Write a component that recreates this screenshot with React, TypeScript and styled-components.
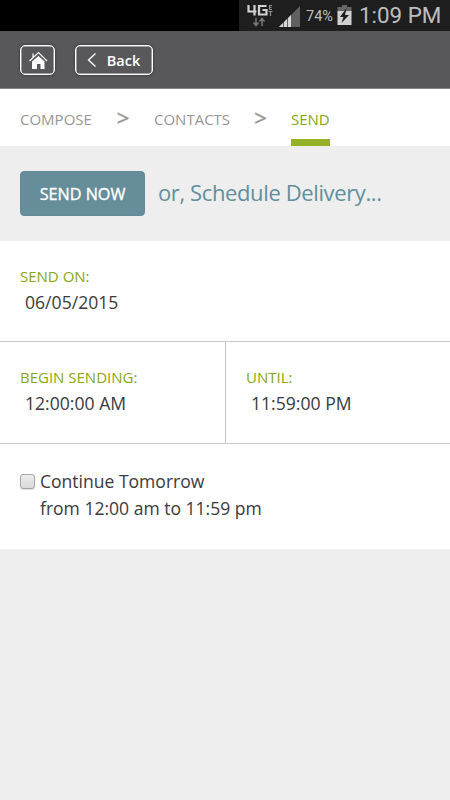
import React from 'react';
import styled, { createGlobalStyle } from 'styled-components';

const Global = createGlobalStyle`
  * { box-sizing: border-box; }
  body { margin: 0; background: #eee; font-family: "Open Sans", sans-serif; color: #3a3a3c; }
`;

const Screen = styled.main`
  width: 450px;
  height: 800px;
  display: flex;
  flex-direction: column;
  background: #eee;
  overflow: hidden;
  white-space: nowrap;
`;

const StatusBar = styled.div`
  flex: none;
  height: 31px;
  display: flex;
  justify-content: flex-end;
  background: #000;
`;

const StatusTray = styled.div`
  width: 211px;
  display: flex;
  background: #1e1e1e;
  color: #bebebe;
  font-family: Roboto, sans-serif;
`;

const TrayIcons = styled.svg`
  flex: none;
  width: 67px;
  height: 31px;
`;

const BatteryIcon = styled.svg`
  flex: none;
  width: 20px;
  height: 31px;
`;

const Percent = styled.span`
  width: 31px;
  font-size: 14.5px;
  line-height: 33px;
`;

const Clock = styled.span`
  margin-left: 2px;
  font-size: 22.4px;
  line-height: 31px;
`;

const Toolbar = styled.header`
  flex: none;
  height: 58px;
  display: flex;
  align-items: flex-start;
  gap: 20px;
  padding: 14px 20px 0;
  background: #58585a;
  border-bottom: 1px solid #858586;
`;

const ToolButton = styled.button<{ $width: number }>`
  width: ${(p) => p.$width}px;
  height: 30px;
  display: flex;
  align-items: center;
  justify-content: center;
  padding: 0;
  border: 1px solid #fff;
  border-radius: 5px;
  background: #58585a;
  box-shadow: inset 0 0 0 0.5px #ddd, 0 0 2px 1px #444446;
  color: #fff;
  font: 600 14.5px/30px "Open Sans", sans-serif;
`;

const BackLabel = styled.span`
  margin-left: 10px;
  margin-right: 1px;
  padding-top: 1px;
`;

const Steps = styled.nav`
  flex: none;
  height: 57px;
  display: flex;
  padding-left: 20px;
  background: #fff;
`;

const Step = styled.span<{ $active?: boolean; $width: number }>`
  width: ${(p) => p.$width}px;
  height: 57px;
  font-size: 15px;
  line-height: 61px;
  color: ${(p) => (p.$active ? '#87a613' : '#979797')};
  border-bottom: ${(p) => (p.$active ? '7px solid #94b025' : '0')};
`;

const Separator = styled.span<{ $width: number }>`
  width: ${(p) => p.$width}px;
  text-align: center;
  font-size: 22px;
  line-height: 57px;
  color: #979797;
  -webkit-text-stroke: 0.4px #979797;
`;

const Actions = styled.section`
  flex: none;
  height: 95px;
  display: flex;
  align-items: flex-start;
  gap: 13px;
  padding: 25px 20px 0;
`;

const SendButton = styled.button`
  width: 125px;
  height: 45px;
  padding: 0;
  border: 1px solid #5f8c98;
  border-radius: 4px;
  background: #668e9a;
  color: #fff;
  font: 400 16.2px/44px "Open Sans", sans-serif;
  -webkit-text-stroke: 0.35px #fff;
`;

const ScheduleLink = styled.a`
  font-size: 22px;
  letter-spacing: -0.38px;
  line-height: 42px;
  color: #628f9b;
`;

const Row = styled.section<{ $height: number }>`
  flex: none;
  height: ${(p) => p.$height}px;
  display: flex;
  background: #fff;
  border-bottom: 1px solid #c8c8c8;
`;

const Field = styled.div<{ $divided?: boolean }>`
  width: ${(p) => (p.$divided ? '226px' : 'auto')};
  padding: 24px 0 0 20px;
  border-right: ${(p) => (p.$divided ? '1px solid #c8c8c8' : '0')};
`;

const FieldLabel = styled.div`
  font-size: 15px;
  line-height: 23px;
  color: #87a810;
`;

const FieldValue = styled.div`
  padding-left: 5px;
  font-size: 17.6px;
  line-height: 28px;
`;

const Repeat = styled.section`
  flex: none;
  height: 105px;
  display: flex;
  gap: 5px;
  padding: 24px 20px 0;
  background: #fff;
  font-size: 17.55px;
  line-height: 27px;
`;

const Checkbox = styled.span`
  width: 15px;
  height: 15px;
  margin-top: 6px;
  border: 1px solid #a5a5a5;
  border-radius: 3px;
  background: linear-gradient(#ececec, #dadada);
  box-shadow: 0 1px 1px #ddd;
`;

export default function App() {
  return (
    <Screen>
      <Global />
      <StatusBar>
        <StatusTray>
          <TrayIcons viewBox="0 0 67 31">
            <g fill="none" stroke="#d2d2d2" strokeWidth="2.2">
              <path d="M9.500 5v6.500h8M15.500 5v10.500" />
              <path d="M27.500 6h-7.500v8.500h7.500v-4.500h-4" />
            </g>
            <path d="M33 5.500h-2.500v4h2.500M30.500 7.500h2M29.500 11.500h4M31.500 11.500v4.500" fill="none" stroke="#8d8d8d" strokeWidth="1.200" />
            <path d="M17 18v7M14.500 22.500 17 25.500l2.500-3M23 26v-7M20.500 21.500 23 18.500l2.500 3" fill="none" stroke="#777" strokeWidth="1.500" />
            <path d="M40 27 61 6v21z" fill="#606060" />
            <path d="M40 27l4-4v4zM45 27v-5l3-3v8zM49 27v-9l3-3v12z" fill="#d8d8d8" />
          </TrayIcons>
          <Percent>74%</Percent>
          <BatteryIcon viewBox="0 0 20 31">
            <path d="M5 5h5v2h4.500v6H0.500V7H5z" fill="#666" />
            <path d="M0.500 11h14v14h-14z" fill="#d0d0d0" />
            <path d="M9.500 8 3 17h3.500l-2 6 7.500-8H8z" fill="#1e1e1e" />
          </BatteryIcon>
          <Clock>1:09 PM</Clock>
        </StatusTray>
      </StatusBar>
      <Toolbar>
        <ToolButton $width={35} aria-label="Home">
          <svg width="20" height="20" viewBox="0 0 20 20">
            <path d="M4 11.500 10.500 6 16.500 11.500V19h-4V14H9v5H4z" fill="#fff" />
            <path d="M1.500 11 10.500 2.500l8.500 8.500M5 3.500v4" fill="none" stroke="#fff" strokeWidth="1.200" />
          </svg>
        </ToolButton>
        <ToolButton $width={78}>
          <svg width="10" height="16" viewBox="0 0 10 16">
            <path d="M8.500 1.500 1.500 8l7 6.500" fill="none" stroke="#fff" strokeWidth="1.300" />
          </svg>
          <BackLabel>Back</BackLabel>
        </ToolButton>
      </Toolbar>
      <Steps>
        <Step $width={72}>COMPOSE</Step>
        <Separator $width={62}>&gt;</Separator>
        <Step $width={76}>CONTACTS</Step>
        <Separator $width={61}>&gt;</Separator>
        <Step $active $width={39}>SEND</Step>
      </Steps>
      <Actions>
        <SendButton>SEND NOW</SendButton>
        <ScheduleLink>or, Schedule Delivery...</ScheduleLink>
      </Actions>
      <Row $height={101}>
        <Field>
          <FieldLabel>SEND ON:</FieldLabel>
          <FieldValue>06/05/2015</FieldValue>
        </Field>
      </Row>
      <Row $height={102}>
        <Field $divided>
          <FieldLabel>BEGIN SENDING:</FieldLabel>
          <FieldValue>12:00:00 AM</FieldValue>
        </Field>
        <Field>
          <FieldLabel>UNTIL:</FieldLabel>
          <FieldValue>11:59:00 PM</FieldValue>
        </Field>
      </Row>
      <Repeat>
        <Checkbox role="checkbox" aria-checked="false" />
        <div>
          <div>Continue Tomorrow</div>
          <div>from 12:00 am to 11:59 pm</div>
        </div>
      </Repeat>
    </Screen>
  );
}
